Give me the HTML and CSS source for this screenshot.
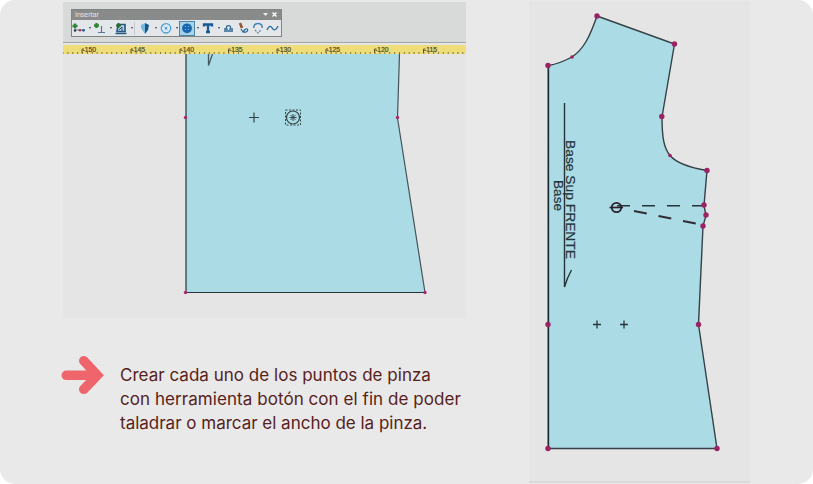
FILE: index.html
```html
<!DOCTYPE html>
<html lang="es">
<head>
<meta charset="utf-8">
<title>Puntos de pinza</title>
<link rel="stylesheet" href="styles.css">
</head>
<body>
<main class="slide">
  <div class="left">
    <section class="editor">
      <header class="header">
        <div class="toolbar">
          <div class="titlebar"><span>Insertar</span>
            <svg width="17" height="9" viewBox="0 0 17 9"><path d="M1 3h5L3.500 6z" fill="#eee"/><path d="M10.500 2.500l4 4m0-4l-4 4" stroke="#fff" stroke-width="1.300"/></svg>
          </div>
          <div class="tools">
            <svg width="16" height="15"><path d="M4 9H14" stroke="#657f93"/><path d="M1.500 5h5M4 2.500v5" stroke="#338235" stroke-width="2.400"/><circle cx="4" cy="9.500" r="1.200" fill="#334"/><circle cx="9" cy="9.300" r="1.300" fill="#b23b4d"/><circle cx="12.500" cy="9.300" r="1.400" fill="#21659c"/></svg>
            <i class="caret"></i>
            <svg width="16" height="15"><path d="M2 4.500h5M4.500 2v5" stroke="#338235" stroke-width="2.300"/><path d="M9.500 5v7M6 11.500h7" stroke="#587b95" stroke-width="1.200"/></svg>
            <i class="caret"></i>
            <svg width="16" height="15"><path d="M5 3.500h7v7H4zM2.500 12.500h11" fill="#b6d6e5" stroke="#285b83" stroke-width="1.700"/><path d="M3 4.500h5M5.500 2v5" stroke="#276c34" stroke-width="2"/><path d="M6 9l3-3v4" fill="none" stroke="#254a66"/></svg>
            <i class="caret"></i>
            <i class="separator"></i>
            <svg width="16" height="15"><path d="M4 4l4-2v11L4 7z" fill="#79b6df"/><path d="M8 2l4 2-1 5-3 4z" fill="#12578e"/></svg>
            <i class="caret"></i>
            <svg width="16" height="15"><circle cx="8" cy="7.300" r="4.700" fill="#d9ecf7" stroke="#519bce" stroke-width="1.300"/><path d="M6.700 6l2.600 2.600m0-2.600L6.700 8.600" stroke="#2f80bb"/></svg>
            <i class="caret"></i>
            <svg class="selected" width="16" height="15"><circle cx="8" cy="7.300" r="4.900" fill="#1767ae"/><path d="M6 5.500h1m2 0h1m-4 3h1m2 0h1" stroke="#7fb9e1"/></svg>
            <i class="caret"></i>
            <svg width="16" height="15"><path d="M4 5.500V3.500h8v2M8 3.500v7M6 11h4" fill="none" stroke="#175895" stroke-width="2.300"/></svg>
            <i class="caret"></i>
            <svg width="15" height="15"><path d="M3 8h3C3 3.500 12 3.500 9 8h3M3 10h9" fill="none" stroke="#326a94" stroke-width="1.300"/></svg>
            <svg width="15" height="15"><path d="M4 2l2 5" stroke="#91572f" stroke-width="2.600"/><path d="M5 8l2 3c3-6 7-2 3 0-2 1-3-1-1-2" fill="none" stroke="#326a9a" stroke-width="1.300"/></svg>
            <svg width="14" height="15"><path d="M3 7C1.500 1 12.500 1 11 7" fill="none" stroke="#4387b5" stroke-width="1.500"/><path d="M4 9l3 3 3-3" fill="none" stroke="#5685a3" stroke-width="1.200" stroke-dasharray="2 1"/></svg>
            <svg width="15" height="15"><path d="M2 9c3-7 5-2 6-1s3 2 5-3" fill="none" stroke="#286c9c" stroke-width="1.300"/></svg>
          </div>
        </div>
      </header>
      <svg class="ruler" width="403" height="9" viewBox="63 45 403 9">
        <path d="M63 53H466" stroke="#5d572f" stroke-width="1.600" stroke-dasharray="1 3.876" stroke-dashoffset=".5"/>
        <path d="M82 53v-4h2M131 53v-4h2M180 53v-4h2M228.500 53v-4h2M277 53v-4h2M326 53v-4h2M374.500 53v-4h2M423.500 53v-4h2" fill="none" stroke="#5d572f"/>
        <g class="ruler-text"><text x="82.500" y="51.500">-150</text><text x="131.500" y="51.500">-145</text><text x="180.500" y="51.500">-140</text><text x="229" y="51.500">-135</text><text x="277.500" y="51.500">-130</text><text x="326.500" y="51.500">-125</text><text x="375" y="51.500">-120</text><text x="424" y="51.500">-115</text></g>
      </svg>
      <svg class="canvas" width="403" height="264" viewBox="63 54 403 264">
        <path d="M186 54H399.500L397.500 118 425 292.500H186z" fill="#abdbe4"/>
        <path d="M399.500 54L397.500 118 425 292.500" fill="none" stroke="#465358" stroke-width="1.200"/>
        <path d="M186 54V292.500H425" fill="none" stroke="#273338" stroke-width="1.200"/>
        <path d="M208.500 54v11.500l4-11.500" fill="none" stroke="#465960" stroke-width="1.300"/>
        <path d="M249 117.500h10M254 112.500v10" stroke="#334348" stroke-width="1.200"/>
        <rect x="285.500" y="110" width="15" height="15" fill="none" stroke="#344b50" stroke-dasharray="2 1.500"/>
        <circle cx="293" cy="117.500" r="6.500" fill="none" stroke="#344247" stroke-width="1.200"/>
        <path d="M289.500 117.500h7M293 114v7M290.500 115l5 5m0-5l-5 5" stroke="#333d40" stroke-width=".9"/>
        <g fill="#aa286e"><circle cx="185.500" cy="117.500" r="1.700"/><circle cx="397.500" cy="117.500" r="1.700"/><circle cx="185.500" cy="292.500" r="1.700"/><circle cx="425" cy="292.500" r="1.700"/></g>
      </svg>
    </section>
    <section class="instruction">
      <svg class="arrow" width="44" height="40" viewBox="61 355 44 40"><path d="M66.300 375.300H96M83.800 360.800l13.500 14.500-13.500 14" fill="none" stroke="#ee656b" stroke-width="9.600" stroke-linecap="round" stroke-linejoin="miter"/></svg>
      <p><span class="line one">Crear cada uno de los puntos de pinza</span><span class="line two">con herramienta botón con el fin de poder</span><span class="line three">taladrar o marcar el ancho de la pinza.</span></p>
    </section>
  </div>
  <section class="pattern">
    <svg width="221" height="480" viewBox="529 1 221 480">
      <path d="M548.500 65.500Q560 63.500 572 57C584 49 590 36 597 16L674.500 44 662 117C662 138 664 148 670 155.500Q679 166 707 170.500L704 205.500 706 215.500 703 226 698.500 324.500 717 448.500H548.500z" fill="#abdbe4" stroke="#344247" stroke-width="1.400"/>
      <path d="M548.300 65.500V448.500" stroke="#182c35" stroke-width="1.400"/>
      <path d="M564.500 103V287Q567 278 571.500 270" fill="none" stroke="#26343b" stroke-width="1.400"/>
      <path d="M617 205.800H705" stroke="#24343a" stroke-width="1.400" stroke-dasharray="13 12"/>
      <path d="M634 211L703 225" stroke="#302c36" stroke-width="2" stroke-dasharray="13 12"/>
      <circle cx="616.500" cy="207.500" r="4.700" fill="none" stroke="#292128" stroke-width="1.800"/><path d="M609.500 207.500H623" stroke="#292128" stroke-width="1.600"/>
      <path d="M593 324.500h8M597 320.500v8M620 324.500h8M624 320.500v8" stroke="#26363b" stroke-width="1.300"/>
      <g class="pattern-text"><text transform="translate(566 140) rotate(90)" textLength="119" lengthAdjust="spacingAndGlyphs">Base Sup FRENTE</text><text transform="translate(553.500 180) rotate(90)" textLength="31" lengthAdjust="spacingAndGlyphs">Base</text></g>
      <g fill="#9d2165"><circle cx="548" cy="65.500" r="2.700"/><circle cx="572" cy="57" r="1.800"/><circle cx="597" cy="16" r="2.700"/><circle cx="674.500" cy="44" r="2.700"/><circle cx="661.800" cy="116.500" r="2.700"/><circle cx="670" cy="155.500" r="1.800"/><circle cx="707" cy="170.500" r="2.700"/><circle cx="704" cy="205" r="2.700"/><circle cx="706" cy="215" r="2.700"/><circle cx="703" cy="226" r="2.700"/><circle cx="548" cy="324.500" r="2.700"/><circle cx="698.500" cy="324.500" r="2.700"/><circle cx="548" cy="448.500" r="2.700"/><circle cx="717" cy="448.500" r="2.700"/></g>
    </svg>
  </section>
</main>
</body>
</html>
```
FILE: styles.css
```css
* { box-sizing: border-box; }
body { margin: 0; background: #fff; font-family: Inter, "Liberation Sans", sans-serif; }
svg { display: block; flex: none; }
.slide { display: flex; gap: 63px; width: 813px; height: 484px; padding: 1px 63px 0; border-radius: 15px; background: #e9e9e9; overflow: hidden; }
.left { width: 403px; padding-top: 1px; }
.editor { height: 316px; background: #e5e5e5; }
.header { height: 41px; padding: 7px 0 0 8px; background: #d8dad9; border-bottom: 1px solid #a5a7a6; }
.toolbar { width: 211px; height: 28px; border: 1px solid #818485; background: #e3e7ea; }
.titlebar { display: flex; justify-content: space-between; height: 10px; padding: 0 2px 0 3px; color: #e6e6e6; background: #898a8a; font: 7px/10px "Liberation Sans", sans-serif; }
.tools { display: flex; height: 16px; align-items: center; margin-left: -1px; }
.caret { width: 5px; height: 15px; display: grid; place-items: center; }
.caret::before { content: ""; border: 1.5px solid transparent; border-top: 2px solid #343a3d; }
.separator { width: 3px; height: 13px; border-left: 1px solid #c4caca; }
.selected { background: #a9d2ea; outline: 1px solid #4b87a5; outline-offset: -1px; }
.ruler { margin-top: 2px; background: #eedd79; }
.ruler-text { font: 6.8px "Liberation Sans", sans-serif; fill: #4e4929; stroke: #4e4929; stroke-width: .2px; }
.instruction { display: flex; align-items: flex-start; padding-top: 37px; }
.instruction p { margin: 8px 0 0 15px; color: #56221a; font-size: 17px; line-height: 24px; }
.arrow { margin-left: -2px; }
.line { display: block; white-space: nowrap; }
.one { letter-spacing: .02px; }
.two { letter-spacing: .06px; }
.three { letter-spacing: -.01px; }
.pattern { width: 221px; height: 482px; background: #e5e5e5; border-bottom: 2px solid #d9d9d9; }
.pattern-text { font: 13.5px "Liberation Sans", sans-serif; fill: #26343b; stroke: #26343b; stroke-width: .2px; }
```
